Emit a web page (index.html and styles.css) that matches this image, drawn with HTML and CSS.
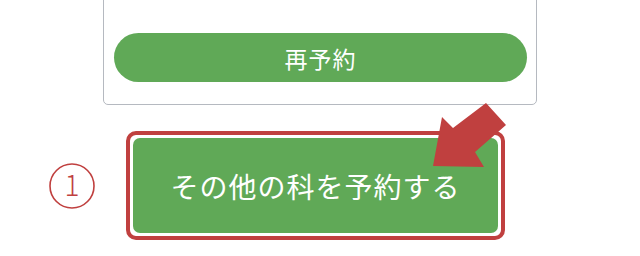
FILE: index.html
```html
<!DOCTYPE html>
<html lang="ja">
<head>
    <meta charset="UTF-8">
    <title>予約</title>
    <link rel="stylesheet" href="styles.css">
</head>
<body>
    <div class="card">
        <button class="pill">再予約</button>
    </div>
    <div class="row">
        <svg class="mark" width="52" height="52" viewBox="0 0 52 52">
            <circle cx="26" cy="26" r="22" fill="none" stroke="#c0403f" stroke-width="1.6"/>
            <text x="26" y="36" text-anchor="middle" class="mark-num">1</text>
        </svg>
        <div class="frame">
            <button class="big">その他の科を予約する</button>
        </div>
    </div>
    <svg class="arrow" width="640" height="256" viewBox="0 0 640 256">
        <polygon points="433,166 442,117 453,128 486,103 506,125 475,152 484,167" fill="#c0403f"/>
    </svg>
</body>
</html>
```

FILE: styles.css
```css
body {
    margin: 0;
    padding: 0;
    background: #fff;
    font-family: "Noto Sans CJK JP", "Noto Sans", sans-serif;
    position: relative;
    width: 640px;
    height: 256px;
    overflow: hidden;
}
.card {
    box-sizing: border-box;
    margin-left: 103px;
    margin-top: -12px;
    width: 434px;
    border: 1px solid #b5b9c0;
    border-radius: 5px;
    padding: 44px 9px 22px 10px;
}
.pill {
    display: block;
    width: 413px;
    height: 49px;
    border: none;
    border-radius: 25px;
    background: #60a957;
    color: #fff;
    font-family: inherit;
    font-size: 23px;
    letter-spacing: 1px;
    padding: 0;
}
.row {
    display: flex;
    align-items: center;
    margin-top: 26px;
    padding-left: 46px;
    gap: 28px;
}
.mark {
    display: block;
}
.mark-num {
    fill: #c0403f;
    font-family: "Noto Sans CJK JP", "Noto Sans", sans-serif;
    font-weight: 300;
    font-size: 28px;
}
.frame {
    border: 4px solid #c0403f;
    border-radius: 10px;
    padding: 3px;
}
.big {
    display: block;
    width: 365px;
    height: 95px;
    border: none;
    border-radius: 7px;
    background: #60a957;
    color: #fff;
    font-family: inherit;
    font-size: 28px;
    letter-spacing: 1px;
    padding: 0;
}
.arrow {
    position: absolute;
    left: 0;
    top: 0;
}
```
